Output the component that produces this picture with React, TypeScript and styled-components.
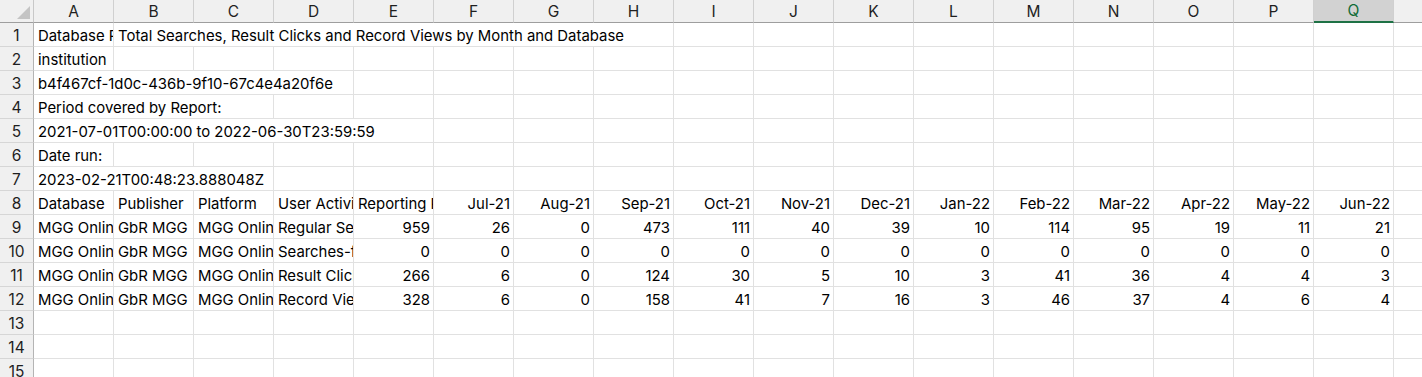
import React from "react";
import styled, { createGlobalStyle } from "styled-components";

const GlobalStyle = createGlobalStyle`
  html, body {
    margin: 0;
    padding: 0;
    background: #ffffff;
    overflow: hidden;
  }
  body {
    font-family: Inter, "Liberation Sans", Arial, sans-serif;
  }
`;

const COLS = "ABCDEFGHIJKLMNOPQR".split("");
const SELECTED = "Q";

type CellData = {
  text?: string;
  span?: number;
  align?: "left" | "right";
};

const months = [
  "Jul-21", "Aug-21", "Sep-21", "Oct-21", "Nov-21", "Dec-21",
  "Jan-22", "Feb-22", "Mar-22", "Apr-22", "May-22", "Jun-22",
];

const dataRows: { activity: string; total: number; values: number[] }[] = [
  { activity: "Regular Searches", total: 959, values: [26, 0, 473, 111, 40, 39, 10, 114, 95, 19, 11, 21] },
  { activity: "Searches-federated and automated", total: 0, values: [0, 0, 0, 0, 0, 0, 0, 0, 0, 0, 0, 0] },
  { activity: "Result Clicks", total: 266, values: [6, 0, 124, 30, 5, 10, 3, 41, 36, 4, 4, 3] },
  { activity: "Record Views", total: 328, values: [6, 0, 158, 41, 7, 16, 3, 46, 37, 4, 6, 4] },
];

// pad a row with empty cells up to the last visible column
const fillRow = (cells: CellData[]): CellData[] => {
  const used = cells.reduce((n, c) => n + (c.span || 1), 0);
  const rest: CellData[] = [];
  for (let i = used; i < COLS.length; i++) rest.push({});
  return [...cells, ...rest];
};

// text that runs over empty neighbours gets a span, like Excel overflow
const sheet: CellData[][] = [
  fillRow([
    { text: "Database Report" },
    { text: "Total Searches, Result Clicks and Record Views by Month and Database", span: 7 },
  ]),
  fillRow([{ text: "institution" }]),
  fillRow([{ text: "b4f467cf-1d0c-436b-9f10-67c4e4a20f6e", span: 4 }]),
  fillRow([{ text: "Period covered by Report:", span: 3 }]),
  fillRow([{ text: "2021-07-01T00:00:00 to 2022-06-30T23:59:59", span: 5 }]),
  fillRow([{ text: "Date run:" }]),
  fillRow([{ text: "2023-02-21T00:48:23.888048Z", span: 3 }]),
  fillRow([
    { text: "Database" },
    { text: "Publisher" },
    { text: "Platform" },
    { text: "User Activity" },
    { text: "Reporting Period Total" },
    ...months.map((m) => ({ text: m, align: "right" as const })),
  ]),
  ...dataRows.map((r) =>
    fillRow([
      { text: "MGG Online" },
      { text: "GbR MGG" },
      { text: "MGG Online" },
      { text: r.activity },
      { text: String(r.total), align: "right" },
      ...r.values.map((v) => ({ text: String(v), align: "right" as const })),
    ])
  ),
  fillRow([]),
  fillRow([]),
  fillRow([]),
];

const Sheet = styled.div`
  display: grid;
  grid-template-columns: 34px repeat(${COLS.length}, 80px);
  grid-template-rows: 23px;
  grid-auto-rows: 24px;
  width: max-content;
  font-size: 14.9px;
  color: #000000;
`;

const Corner = styled.div`
  position: relative;
  box-sizing: border-box;
  background: #f0f0f0;
  border-right: 1px solid #c8c8c8;
  border-bottom: 1px solid #9e9e9e;

  &::after {
    content: "";
    position: absolute;
    right: 3px;
    bottom: 3px;
    width: 0;
    height: 0;
    border-left: 13px solid transparent;
    border-bottom: 13px solid #c4c4c4;
  }
`;

const ColHead = styled.div<{ $selected?: boolean }>`
  box-sizing: border-box;
  display: flex;
  align-items: center;
  justify-content: center;
  background: ${({ $selected }) => ($selected ? "#d2d2d2" : "#f0f0f0")};
  color: ${({ $selected }) => ($selected ? "#0f6b36" : "#1f1f1f")};
  border-right: 1px solid #d0d0d0;
  border-bottom: ${({ $selected }) => ($selected ? "2px solid #1e7145" : "1px solid #9e9e9e")};
  font-size: 15.5px;
`;

const RowHead = styled.div`
  box-sizing: border-box;
  display: flex;
  align-items: center;
  justify-content: center;
  padding-top: 2px;
  background: #f0f0f0;
  color: #1f1f1f;
  border-right: 1px solid #b4b4b4;
  border-bottom: 1px solid #d6d6d6;
  font-size: 15.5px;
`;

// the cell clips its text at the gridline, as Excel does
const Cell = styled.div<{ $span: number; $align: "left" | "right" }>`
  grid-column: span ${({ $span }) => $span};
  box-sizing: border-box;
  display: flex;
  align-items: center;
  justify-content: ${({ $align }) => ($align === "right" ? "flex-end" : "flex-start")};
  border-right: 1px solid #e1e1e1;
  border-bottom: 1px solid #e1e1e1;
  white-space: nowrap;
  overflow: hidden;
  background: #ffffff;
`;

const CellText = styled.span<{ $align: "left" | "right" }>`
  flex-shrink: 0;
  padding-top: 2px;
  padding-left: ${({ $align }) => ($align === "right" ? "0" : "4px")};
  padding-right: ${({ $align }) => ($align === "right" ? "3px" : "0")};
`;

export default function App() {
  return (
    <>
      <GlobalStyle />
      <Sheet>
        <Corner />
        {COLS.map((c) => (
          <ColHead key={c} $selected={c === SELECTED}>
            {c}
          </ColHead>
        ))}
        {sheet.map((row, ri) => (
          <React.Fragment key={ri}>
            <RowHead>{ri + 1}</RowHead>
            {row.map((cell, ci) => {
              const align = cell.align || "left";
              return (
                <Cell key={ci} $span={cell.span || 1} $align={align}>
                  {cell.text && <CellText $align={align}>{cell.text}</CellText>}
                </Cell>
              );
            })}
          </React.Fragment>
        ))}
      </Sheet>
    </>
  );
}
